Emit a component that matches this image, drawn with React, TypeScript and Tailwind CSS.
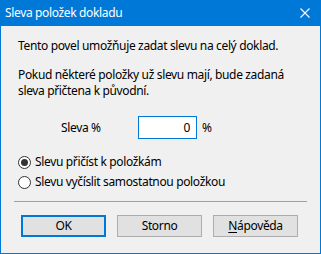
import React from "react";

function Radio({ checked, label }: { checked: boolean; label: string }) {
  return (
    <div className="flex items-center h-[20px]">
      <div className="w-[13px] h-[13px] rounded-full border border-[#333333] bg-white flex items-center justify-center">
        {checked && <div className="w-[7px] h-[7px] rounded-full bg-[#333333]" />}
      </div>
      <span className="ml-[4px]">{label}</span>
    </div>
  );
}

export default function App() {
  return (
    <div
      className="w-[321px] h-[254px] bg-[#0078d7] flex flex-col px-[1px] pb-[1px] text-[12px] tracking-[-0.35px] text-black"
      style={{ fontFamily: '"Noto Sans", "Open Sans", sans-serif' }}
    >
      <div className="h-[26px] flex items-center justify-between text-white shrink-0">
        <span className="ml-[4px] text-[12px]">Sleva položek dokladu</span>
        <svg width="10" height="10" viewBox="0 0 10 10" className="mr-[10px]">
          <path d="M0.5 0.5 L9.5 9.5 M9.5 0.5 L0.5 9.5" stroke="white" strokeWidth="1.1" />
        </svg>
      </div>
      <div className="flex-1 bg-[#f0f0f0] flex flex-col px-[17px]">
        <p className="mt-[12px] leading-[16px]">Tento povel umožňuje zadat slevu na celý doklad.</p>
        <p className="mt-[13px] leading-[16px]">
          Pokud některé položky už slevu mají, bude zadaná
          <br />
          sleva přičtena k původní.
        </p>
        <div className="mt-[17px] flex items-center h-[23px]">
          <span className="ml-[43px] w-[77px]">Sleva %</span>
          <div className="w-[59px] h-[23px] border border-[#0078d7] bg-white flex items-center justify-end pr-[6px]">
            0
          </div>
          <span className="ml-[5px]">%</span>
        </div>
        <div className="mt-[13px] flex flex-col">
          <Radio checked label="Slevu přičíst k položkám" />
          <Radio checked={false} label="Slevu vyčíslit samostatnou položkou" />
        </div>
        <div className="mt-[9px] -mx-[4px] h-[1px] bg-[#a0a0a0]" />
        <div className="mt-[13px] flex gap-[11px] ml-[3px]">
          <button className="w-[85px] h-[22px] border-2 border-[#0078d7] bg-[#e1e1e1] flex items-center justify-center">
            OK
          </button>
          <button className="w-[85px] h-[22px] border border-[#adadad] bg-[#e1e1e1] flex items-center justify-center">
            Storno
          </button>
          <button className="w-[85px] h-[22px] border border-[#adadad] bg-[#e1e1e1] flex items-center justify-center">
            <span>
              <span className="underline underline-offset-2">N</span>ápověda
            </span>
          </button>
        </div>
      </div>
    </div>
  );
}
